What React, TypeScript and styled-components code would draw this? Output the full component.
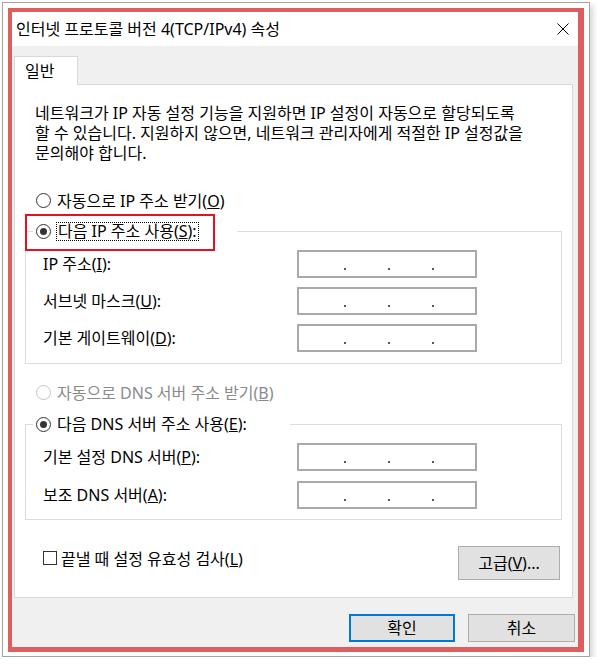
import styled, { createGlobalStyle } from 'styled-components';

const GlobalStyle = createGlobalStyle`
    body {
        margin: 0;
        background: #ffffff;
        font-family: "Noto Sans", "Noto Sans CJK KR", sans-serif;
        font-size: 16px;
        color: #000000;
    }
`;

const Window = styled.div`
    margin: 2px 0 0 2px;
    width: fit-content;
    border: 1px solid #a3a3a3;
    padding: 5px 5px 4px 5px;
    background: #ffffff;
    box-shadow: 3px 3px 6px rgba(0, 0, 0, 0.16);
`;

const RedFrame = styled.div`
    border-style: solid;
    border-color: #dc5e5f;
    border-width: 4px 6px 5px 4px;
`;

const Dialog = styled.div`
    width: 566px;
    height: 635px;
    display: flex;
    flex-direction: column;
`;

const TitleBar = styled.div`
    height: 34px;
    flex-shrink: 0;
    background: #ffffff;
    display: flex;
    align-items: center;
    justify-content: space-between;
    padding: 0 9px 0 4px;
    line-height: 20px;
`;

const Body = styled.div`
    flex: 1;
    background: #f0f0f0;
    padding: 10px 3px 0 2px;
    display: flex;
    flex-direction: column;
`;

const TabStrip = styled.div`
    display: flex;
`;

const Tab = styled.div`
    box-sizing: border-box;
    width: 64px;
    height: 29px;
    margin-bottom: -1px;
    padding: 0 0 3px 10px;
    display: flex;
    align-items: center;
    background: #ffffff;
    border: 1px solid #d9d9d9;
    border-bottom: none;
    position: relative;
    z-index: 1;
`;

const Panel = styled.div`
    box-sizing: border-box;
    width: 559px;
    border: 1px solid #d9d9d9;
    background: #ffffff;
    padding: 18px 10px 17px 10px;
    display: flex;
    flex-direction: column;
`;

const Description = styled.p`
    margin: 0 0 0 10px;
    line-height: 20px;
`;

const RadioRow = styled.div<{ $top: number; $disabled?: boolean }>`
    display: flex;
    align-items: center;
    height: 20px;
    margin-top: ${p => p.$top}px;
    padding-left: 11px;
    color: ${p => (p.$disabled ? '#8a8a8a' : '#000000')};
`;

const Radio = styled.span<{ $checked?: boolean; $disabled?: boolean }>`
    box-sizing: border-box;
    width: 15px;
    height: 15px;
    border-radius: 50%;
    border: 1px solid ${p => (p.$disabled ? '#c4c4c4' : '#333333')};
    background: #ffffff;
    margin-right: 6px;
    flex-shrink: 0;
    display: flex;
    align-items: center;
    justify-content: center;
    &::after {
        content: '';
        display: ${p => (p.$checked ? 'block' : 'none')};
        width: 7px;
        height: 7px;
        border-radius: 50%;
        background: #333333;
    }
`;

const GroupBox = styled.fieldset<{ $top: number; $bottom: number }>`
    margin: ${p => p.$top}px 0 0 0;
    padding: 9px 0 ${p => p.$bottom}px 7px;
    border: 1px solid #dcdcdc;
    min-width: 0;
`;

const Legend = styled.legend<{ $width: number }>`
    box-sizing: border-box;
    width: ${p => p.$width}px;
    height: 20px;
    padding: 0 0 0 3px;
    position: relative;
`;

const LegendInner = styled.span`
    display: flex;
    align-items: center;
    height: 20px;
    line-height: 20px;
`;

const FocusText = styled.span`
    border: 1px dotted #000000;
    padding: 0 1px;
    line-height: 17px;
    margin-left: -1px;
`;

const Highlight = styled.span`
    position: absolute;
    left: -8px;
    top: -7px;
    width: 190px;
    height: 37px;
    box-sizing: border-box;
    border: 2px solid #e3141f;
    pointer-events: none;
`;

const Rows = styled.div<{ $gap: number }>`
    display: flex;
    flex-direction: column;
    gap: ${p => p.$gap}px;
    padding-left: 10px;
`;

const FieldRow = styled.div`
    display: grid;
    grid-template-columns: 254px 180px;
    align-items: center;
    line-height: 20px;
`;

const IpBox = styled.div`
    box-sizing: border-box;
    width: 180px;
    height: 28px;
    border: 2px solid #a9a9a9;
    background: #ffffff;
    display: flex;
    align-items: flex-end;
    padding: 0 0 6px 45px;
    gap: 42px;
`;

const Dot = styled.span`
    width: 2px;
    height: 2px;
    background: #5a5470;
`;

const Footer = styled.div`
    display: flex;
    justify-content: space-between;
    align-items: flex-start;
    margin-top: 26px;
`;

const CheckRow = styled.label`
    display: flex;
    align-items: center;
    height: 20px;
    margin-top: 2px;
    padding-left: 18px;
`;

const CheckBox = styled.span`
    box-sizing: border-box;
    width: 14px;
    height: 14px;
    border: 1px solid #333333;
    background: #ffffff;
    margin-right: 4px;
`;

const Button = styled.button<{ $width: number; $height: number; $default?: boolean }>`
    box-sizing: border-box;
    width: ${p => p.$width}px;
    height: ${p => p.$height}px;
    background: #e1e1e1;
    border: ${p => (p.$default ? '2px solid #0078d7' : '1px solid #adadad')};
    font-family: inherit;
    font-size: 16px;
    color: #000000;
    padding: 0;
    line-height: 20px;
`;

const AdvancedButton = styled(Button)`
    margin-right: 2px;
`;

const ButtonBar = styled.div`
    display: flex;
    justify-content: flex-end;
    gap: 13px;
    margin-top: 16px;
`;

function IpField() {
    return (
        <IpBox>
            <Dot />
            <Dot />
            <Dot />
        </IpBox>
    );
}

function CloseIcon() {
    return (
        <svg width="12" height="12" viewBox="0 0 12 12">
            <path d="M0.5 0.5 L11.5 11.5 M11.5 0.5 L0.5 11.5" stroke="#000" strokeWidth="1" fill="none" />
        </svg>
    );
}

export default function App() {
    return (
        <>
            <GlobalStyle />
            <Window>
                <RedFrame>
                    <Dialog>
                        <TitleBar>
                            <span>인터넷 프로토콜 버전 4(TCP/IPv4) 속성</span>
                            <CloseIcon />
                        </TitleBar>
                        <Body>
                            <TabStrip>
                                <Tab>일반</Tab>
                            </TabStrip>
                            <Panel>
                                <Description>
                                    네트워크가 IP 자동 설정 기능을 지원하면 IP 설정이 자동으로 할당되도록
                                    <br />
                                    할 수 있습니다. 지원하지 않으면, 네트워크 관리자에게 적절한 IP 설정값을
                                    <br />
                                    문의해야 합니다.
                                </Description>

                                <RadioRow $top={27}>
                                    <Radio />
                                    <span>자동으로 IP 주소 받기(<u>O</u>)</span>
                                </RadioRow>

                                <GroupBox $top={11} $bottom={11}>
                                    <Legend $width={204}>
                                        <LegendInner>
                                            <Radio $checked />
                                            <FocusText>다음 IP 주소 사용(<u>S</u>):</FocusText>
                                        </LegendInner>
                                        <Highlight />
                                    </Legend>
                                    <Rows $gap={9}>
                                        <FieldRow>
                                            <span>IP 주소(<u>I</u>):</span>
                                            <IpField />
                                        </FieldRow>
                                        <FieldRow>
                                            <span>서브넷 마스크(<u>U</u>):</span>
                                            <IpField />
                                        </FieldRow>
                                        <FieldRow>
                                            <span>기본 게이트웨이(<u>D</u>):</span>
                                            <IpField />
                                        </FieldRow>
                                    </Rows>
                                </GroupBox>

                                <RadioRow $top={18} $disabled>
                                    <Radio $disabled />
                                    <span>자동으로 DNS 서버 주소 받기(<u>B</u>)</span>
                                </RadioRow>

                                <GroupBox $top={12} $bottom={10}>
                                    <Legend $width={257}>
                                        <LegendInner>
                                            <Radio $checked />
                                            <span>다음 DNS 서버 주소 사용(<u>E</u>):</span>
                                        </LegendInner>
                                    </Legend>
                                    <Rows $gap={10}>
                                        <FieldRow>
                                            <span>기본 설정 DNS 서버(<u>P</u>):</span>
                                            <IpField />
                                        </FieldRow>
                                        <FieldRow>
                                            <span>보조 DNS 서버(<u>A</u>):</span>
                                            <IpField />
                                        </FieldRow>
                                    </Rows>
                                </GroupBox>

                                <Footer>
                                    <CheckRow>
                                        <CheckBox />
                                        <span>끝낼 때 설정 유효성 검사(<u>L</u>)</span>
                                    </CheckRow>
                                    <AdvancedButton $width={102} $height={34}>고급(<u>V</u>)...</AdvancedButton>
                                </Footer>
                            </Panel>
                            <ButtonBar>
                                <Button $width={106} $height={28} $default>확인</Button>
                                <Button $width={107} $height={28}>취소</Button>
                            </ButtonBar>
                        </Body>
                    </Dialog>
                </RedFrame>
            </Window>
        </>
    );
}
